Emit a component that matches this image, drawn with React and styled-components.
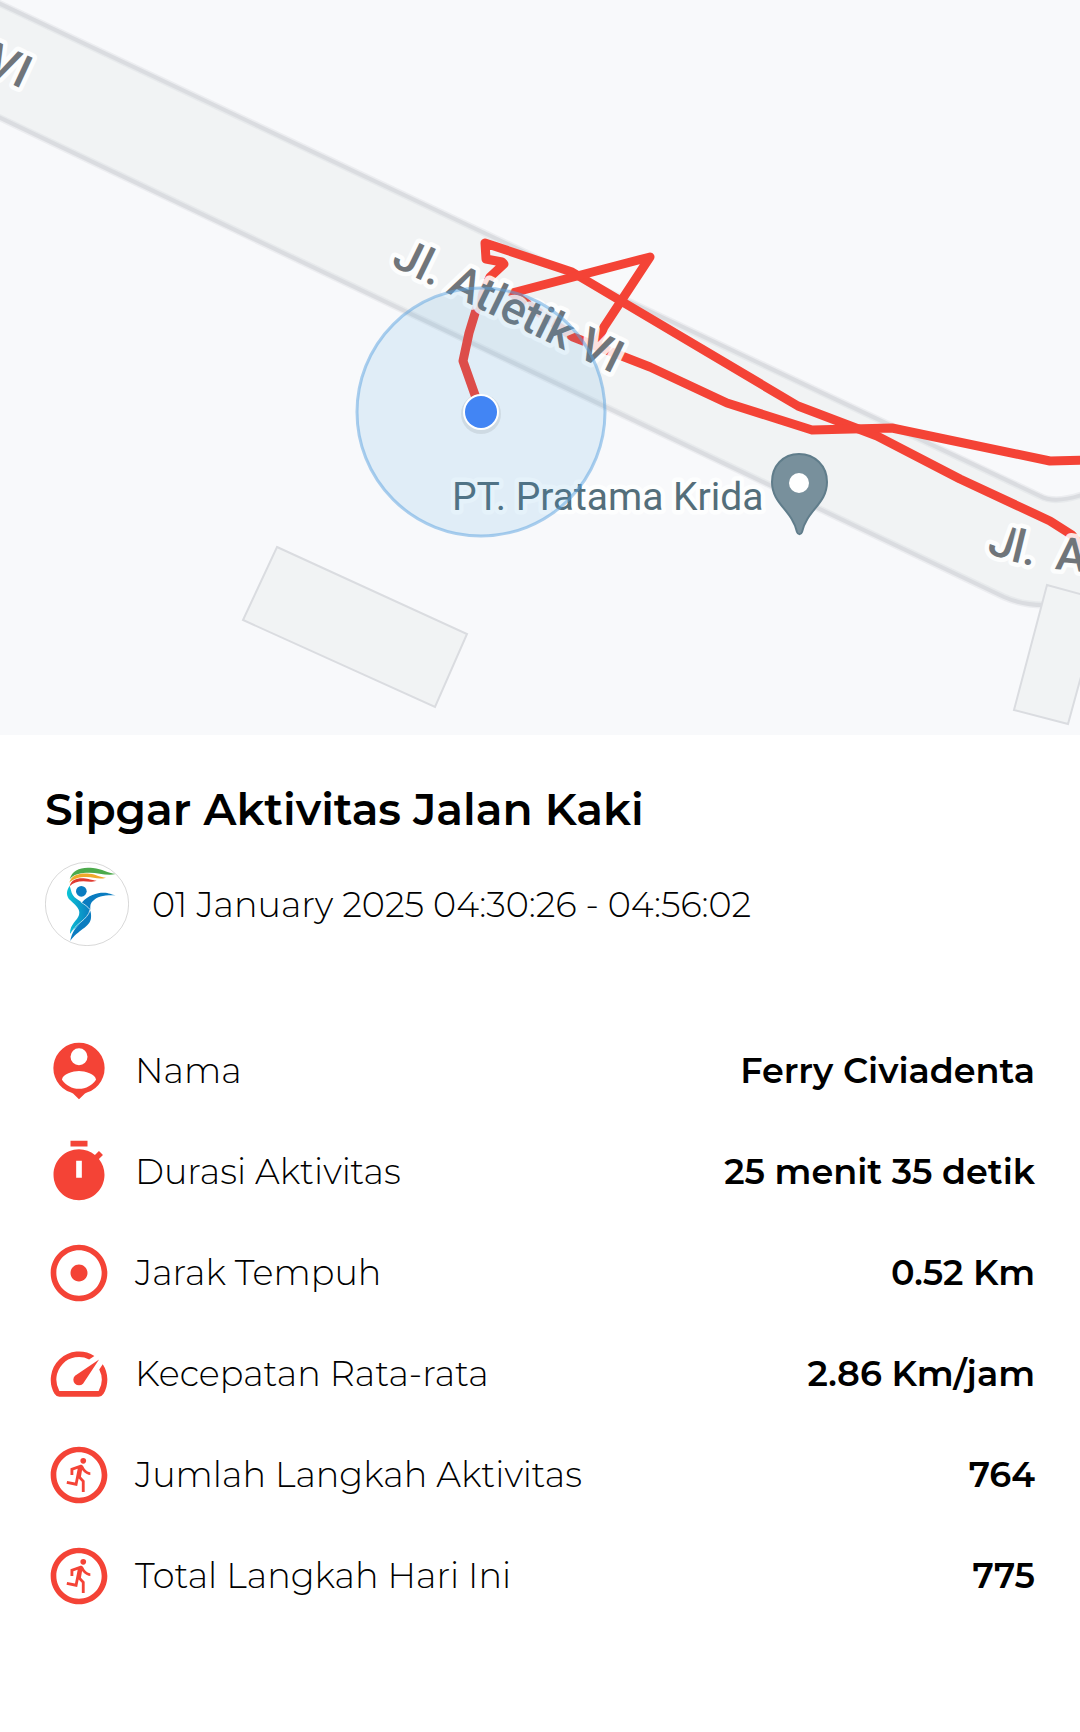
import React from "react";

import styled, { createGlobalStyle } from "styled-components";
import { MdAdjust, MdOutlineRunCircle, MdSpeed } from "react-icons/md";

const colors = {
  accent: "#f44336",
  land: "#f8f9fb",
  road: "#f1f3f4",
  roadEdge: "#dadce0",
  roadLabel: "#70757a",
  place: "#546e7a",
};

const GlobalStyle = createGlobalStyle`
  body {
    margin: 0;
    background-color: #fff;
    color: #000;
    font-family: Montserrat, Inter, sans-serif;
  }
`;

const MapView = styled.svg`
  display: block;
  width: 100%;
  height: auto;
  background-color: ${colors.land};
`;

const MapLabel = styled.text`
  font-family: Roboto, sans-serif;
  font-size: ${(props) => (props.$road ? "46px" : "39px")};
  font-weight: ${(props) => (props.$road ? 500 : 400)};
  fill: ${(props) => (props.$road ? colors.roadLabel : colors.place)};
  stroke: rgba(255, 255, 255, 0.85);
  stroke-width: 9px;
  stroke-linejoin: round;
  paint-order: stroke;
`;

const Details = styled.section`
  padding: 48px 45px 120px;
`;

const Title = styled.h1`
  margin: 0 0 26px;
  font-size: 44px;
  font-weight: 600;
  line-height: 53px;
`;

const Session = styled.div`
  display: flex;
  align-items: center;
  gap: 23px;
  margin-bottom: 91px;
  font-size: 35px;
  font-weight: 300;
`;

const Stats = styled.dl`
  display: flex;
  flex-direction: column;
  gap: 33px;
  margin: 0;
`;

const Stat = styled.div`
  display: flex;
  align-items: center;
  gap: 22px;
  font-size: 35px;
  line-height: 44px;

  svg {
    flex: none;
    width: 68px;
    height: 68px;
    fill: ${colors.accent};
  }
`;

const Label = styled.dt`
  flex: 1;
  font-weight: 300;
`;

const Value = styled.dd`
  margin: 0;
  font-weight: 600;
  text-align: right;
`;

const PersonPin = () => (
  <svg viewBox="0 0 24 24" aria-hidden="true">
    <path
      fillRule="evenodd"
      d="M12 2a9 9 0 0 0-3 17.5l.9.4L12 22l2.1-2.1.9-.4A9 9 0 0 0 12 2zm0 2a3 3 0 1 1 0 6 3 3 0 0 1 0-6zm0 14.3c-2.5 0-4.71-1.28-6-3.22.03-1.99 4-3.08 6-3.08s5.97 1.09 6 3.08c-1.29 1.94-3.5 3.22-6 3.22z"
    />
  </svg>
);

const Stopwatch = () => (
  <svg viewBox="0 0 24 24" aria-hidden="true">
    <path
      fillRule="evenodd"
      d="M15 1H9v2h6V1zm-4 13h2V8h-2v6zm8.03-6.61l1.42-1.42c-.43-.51-.9-.99-1.41-1.41l-1.42 1.42C16.07 4.74 14.12 4 12 4c-4.97 0-9 4.03-9 9s4.02 9 9 9 9-4.03 9-9c0-2.12-.74-4.07-1.97-5.61z"
    />
  </svg>
);

const Logo = () => (
  <svg width="84" height="84" viewBox="45 36 252 252" aria-hidden="true">
    <defs>
      <linearGradient id="body" x1="0" y1="0" x2="1" y2="0">
        <stop offset="0" stopColor="#0cc5d6" />
        <stop offset="1" stopColor="#0a7cc0" />
      </linearGradient>
    </defs>
    <circle
      cx="171"
      cy="162"
      r="125"
      fill="#fff"
      stroke="#c4c4c4"
      strokeWidth="2"
    />
    <path
      fill="#4caa4c"
      d="M119 88c8-30 36-38 70-34 28 3 44 15 68 18-26 6-52-4-78-4-28 0-50 5-60 20z"
    />
    <path
      fill="#f0a92b"
      d="M118 98c5-24 33-30 60-27 22 2 32 11 50 12-22 7-37-2-58-2-24 0-41 6-52 17z"
    />
    <path
      fill="#e03a30"
      d="M119 109c4-20 22-25 42-24 16 1 22 6 39 7-17 6-27 2-40 2-18 0-31 5-41 15z"
    />
    <circle cx="154" cy="124" r="16" fill="#0a7cc0" />
    <path
      fill="#0a7cc0"
      d="M155 158c20-23 44-30 66-30 16 0 24 6 36 8-31 0-49 1-64 13-13 10-12 17-12 29z"
    />
    <path
      fill="url(#body)"
      d="M119 107c-12 18-10 32 2 44 17 17 31 26 26 44-5 18-27 25-27 57 17-24 53-38 61-74-18-22-50-30-56-50-2-8-4-14-6-21z"
    />
    <path
      fill="#0a7cc0"
      d="M180 181c-8 32-51 42-59 92 22-33 59-41 62-69 1-9 0-16-3-23z"
    />
    <path
      fill="none"
      stroke="#fff"
      strokeWidth="2"
      d="M152 156c11 7 22 14 28 23-5 31-49 43-58 75"
    />
  </svg>
);

const ActivityMap = () => (
  <MapView viewBox="0 0 1080 735" role="img" aria-label="Peta aktivitas">
    <defs>
      <path id="nextStreet" d="M986 552Q1022 570 1120 574" />
      <path id="northEdge" d="M-10 -1L1040 496Q1056 505 1090 492" />
      <path id="southEdge" d="M-10 113L1004 597Q1022 605 1044 605" />
    </defs>

    <path
      fill={colors.road}
      d="M0 4L1040 496Q1056 505 1090 492V605H1040Q1022 605 1004 597L0 118z"
    />
    <g fill="none" stroke={colors.roadEdge}>
      <g strokeWidth="7" strokeOpacity="0.4">
        <use href="#northEdge" />
        <use href="#southEdge" />
      </g>
      <g strokeWidth="4">
        <use href="#northEdge" />
        <use href="#southEdge" />
      </g>
    </g>
    <g fill={colors.road} stroke={colors.roadEdge} strokeWidth="2">
      <path d="M277 547L467 634L435 707L243 620z" />
      <path d="M1047 585L1014 710L1068 724L1102 600z" />
    </g>

    <g
      fill="none"
      stroke={colors.accent}
      strokeWidth="9"
      strokeLinejoin="round"
    >
      <path d="M481 412L463 361L469 333L476 310L490 277L504 264L502 262L486 259L485 243L572 272L798 406L877 436L960 479L1050 521L1072 535L1084 550" />
      <path d="M1090 460L1050 461L892 428L812 430L727 403L650 367L573 337L512 293L650 257L604 327L596 345" />
    </g>

    <path
      fill="#78909c"
      stroke="#607d8b"
      strokeWidth="2"
      d="M799 454c-16 0-27 12-27 28 0 22 20 28 25 50 1 3 4 3 5 0 5-22 25-28 25-50 0-16-12-28-28-28z"
    />
    <circle cx="799" cy="483" r="10" fill="#fff" />

    <MapLabel $road textAnchor="end" transform="translate(22 89) rotate(25)">
      VI
    </MapLabel>
    <MapLabel $road transform="translate(390 265) rotate(26)">
      Jl. Atletik VI
    </MapLabel>
    <MapLabel $road>
      <textPath href="#nextStreet">Jl.</textPath>
    </MapLabel>
    <MapLabel $road>
      <textPath href="#nextStreet" startOffset="71">
        A
      </textPath>
    </MapLabel>
    <MapLabel x="452" y="510">
      PT. Pratama Krida
    </MapLabel>

    <circle
      cx="481"
      cy="412"
      r="124"
      fill="#3a9be2"
      fillOpacity="0.12"
      stroke="#5aa2e0"
      strokeOpacity="0.5"
      strokeWidth="3"
    />
    <circle cx="481" cy="414" r="20" fill="#000" fillOpacity="0.08" />
    <circle cx="481" cy="412" r="18" fill="#fff" />
    <circle cx="481" cy="412" r="16" fill="#4285f4" />
  </MapView>
);

const stats = [
  { label: "Nama", value: "Ferry Civiadenta", Icon: PersonPin },
  { label: "Durasi Aktivitas", value: "25 menit 35 detik", Icon: Stopwatch },
  { label: "Jarak Tempuh", value: "0.52 Km", Icon: MdAdjust },
  { label: "Kecepatan Rata-rata", value: "2.86 Km/jam", Icon: MdSpeed },
  { label: "Jumlah Langkah Aktivitas", value: "764", Icon: MdOutlineRunCircle },
  { label: "Total Langkah Hari Ini", value: "775", Icon: MdOutlineRunCircle },
];

const App = () => (
  <main>
    <GlobalStyle />
    <ActivityMap />
    <Details>
      <Title>Sipgar Aktivitas Jalan Kaki</Title>
      <Session>
        <Logo />
        <span>01 January 2025 04:30:26 - 04:56:02</span>
      </Session>
      <Stats>
        {stats.map(({ label, value, Icon }) => (
          <Stat key={label}>
            <Icon />
            <Label>{label}</Label>
            <Value>{value}</Value>
          </Stat>
        ))}
      </Stats>
    </Details>
  </main>
);

export default App;
